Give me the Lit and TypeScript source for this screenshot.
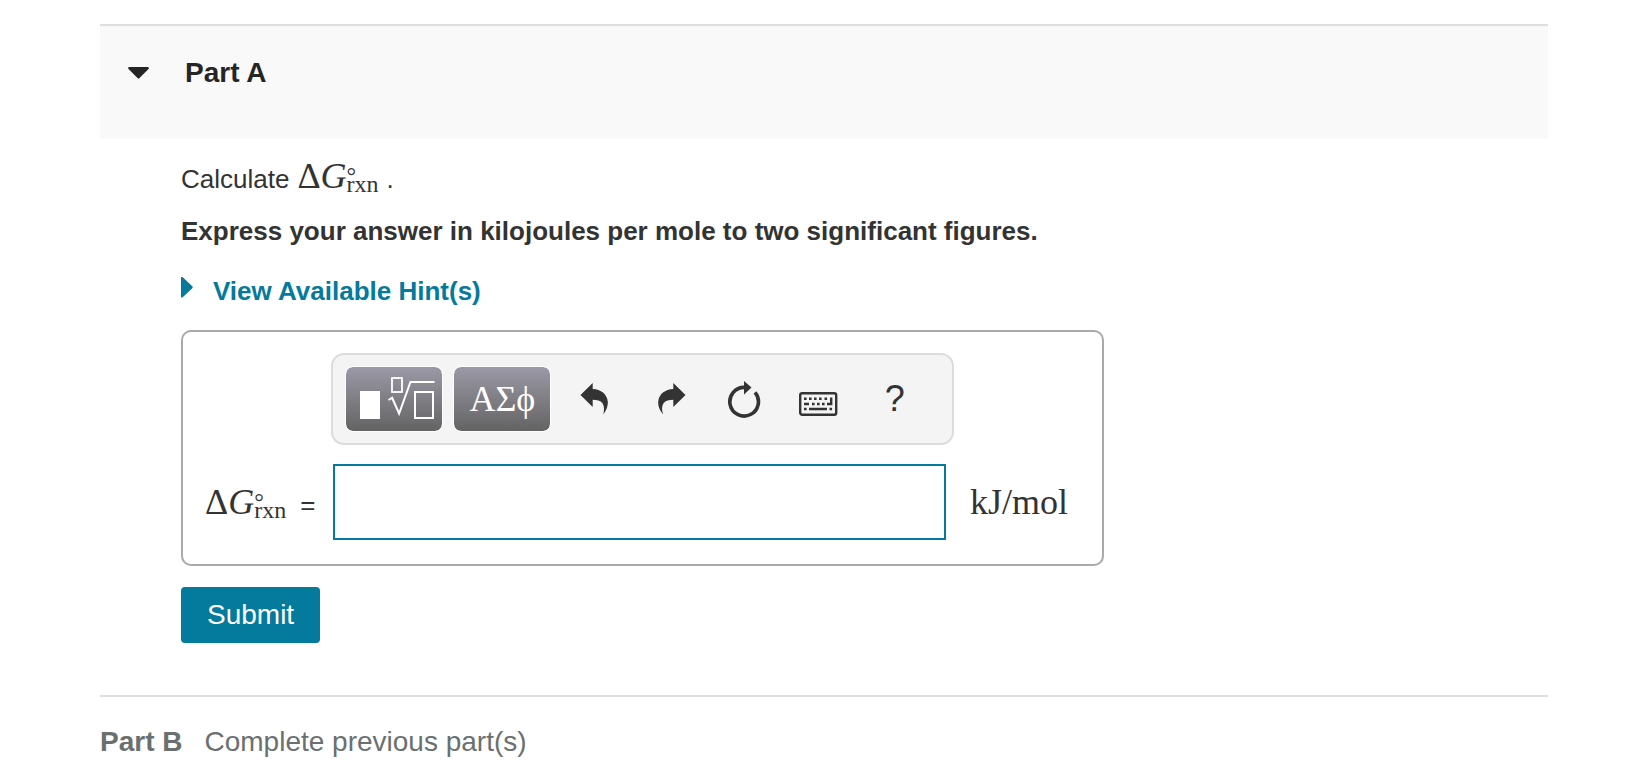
import { LitElement, html, css, svg } from "lit";
import { customElement, state } from "lit/decorators.js";

const templatesIcon = svg`
  <svg width="84" height="44" viewBox="0 0 84 44" fill="none" stroke="#fff" aria-hidden="true">
    <rect x="8" y="14" width="20" height="28" fill="#fff" stroke="none" />
    <rect x="40" y="1" width="10" height="14" stroke-width="1.8" />
    <path d="M36.500 23l3.600-2.200 7 15.700L58.500 5h24" stroke-width="2" />
    <rect x="63" y="15" width="18" height="26" stroke-width="2" />
  </svg>`;

const undoIcon = svg`
  <svg width="41" height="40" viewBox="0 0 41 40" fill="currentColor" aria-hidden="true">
    <path d="M6.500 16L18.700 4v6C27 10.400 33 15 33.800 22.500c.3 4.800-1.800 9.500-4.500 12.800 1-4 1.200-8-.8-11-2-2.800-5.500-3.600-9.800-3.600V28z" />
  </svg>`;

const redoIcon = svg`
  <svg width="41" height="40" viewBox="0 0 41 40" fill="currentColor" aria-hidden="true">
    <path d="M36.500 16L24.300 4v6C16 10.400 10 15 9.200 22.500c-.3 4.800 1.800 9.500 5 12.800-1.500-4-1.700-8 .3-11 2-2.800 5.500-3.600 9.800-3.600V28z" />
  </svg>`;

const resetIcon = svg`
  <svg width="41" height="40" viewBox="0 0 41 40" fill="none" aria-hidden="true">
    <path d="M31 13.400A14.300 14.300 0 1 1 20.500 8.400" stroke="currentColor" stroke-width="3.600" />
    <path d="M20 2l7.500 6.500L20 15.500z" fill="currentColor" />
  </svg>`;

const keyboardIcon = svg`
  <svg width="41" height="40" viewBox="0 0 41 40" fill="none" stroke="currentColor" aria-hidden="true">
    <rect x="1.200" y="14.200" width="36" height="21.600" rx="2" stroke-width="2.400" />
    <g stroke-width="2.400">
      <path d="M5 19.700h2.600M10 19.700h2.600M15 19.700h2.600M20 19.700h2.600M25.500 19.700h2.600" />
      <path d="M5 25h5M13 25h2.600M18 25h2.600M23 25h2.600M28 25h4.200v-6.500" />
      <path d="M5 30h2.600M10 30h18M30.500 30h2.600" />
    </g>
  </svg>`;

@customElement("gibbs-symbol")
class GibbsSymbol extends LitElement {
  static styles = css`
    :host {
      display: inline-flex;
      align-items: flex-start;
      font-family: "Liberation Serif", serif;
      font-size: 36px;
      line-height: 40px;
    }
    .scripts {
      display: flex;
      flex-direction: column;
      padding-top: 16px;
    }
    sup,
    sub {
      font-size: 24px;
      line-height: 8px;
    }
  `;

  render() {
    return html`<span>Δ</span><i>G</i><span class="scripts"><sup>°</sup><sub>rxn</sub></span>`;
  }
}

@customElement("app-root")
class AppRoot extends LitElement {
  @state() private open = true;

  static styles = css`
    :host {
      display: block;
      box-sizing: border-box;
      padding: 24px 92px 24px 100px;
      background: #fff;
      color: #333;
      font-family: "Liberation Sans", Arial, sans-serif;
      font-size: 26px;
    }
    h2,
    p {
      margin: 0;
      font-size: inherit;
    }
    button {
      border: 0;
      margin: 0;
      padding: 0;
      background: none;
      color: inherit;
      font: inherit;
      cursor: pointer;
    }
    .part-head {
      border-top: 2px solid #dedede;
      background: #f9f9f9;
      padding: 31px 28px 50px;
    }
    .toggle {
      display: flex;
      align-items: center;
      gap: 36px;
      font-size: 28px;
      font-weight: bold;
      line-height: 32px;
      color: #252525;
    }
    .body {
      padding: 17px 0 52px 81px;
    }
    .question {
      display: flex;
      align-items: baseline;
      gap: 8px;
      line-height: 40px;
    }
    .instruction {
      margin-top: 12px;
      font-weight: bold;
      line-height: 40px;
    }
    .hints {
      display: flex;
      width: fit-content;
      gap: 20px;
      margin-top: 24px;
      font-weight: bold;
      line-height: 32px;
      color: #047a9c;
      text-decoration: none;
    }
    .answer {
      box-sizing: border-box;
      display: grid;
      grid-template-columns: auto minmax(0, 1fr) auto;
      align-items: center;
      row-gap: 19px;
      max-width: 923px;
      margin-top: 23px;
      padding: 21px 34px 24px 22px;
      border: 2px solid #a9a9a9;
      border-radius: 10px;
    }
    .toolbar {
      grid-column: 2;
      display: flex;
      align-items: center;
      gap: 10px;
      margin: 0 -8px 0 -2px;
      padding: 11px 12px;
      border: 2px solid #dcdcdc;
      border-radius: 13px;
      background: #f4f4f4;
    }
    .palette {
      box-sizing: border-box;
      display: flex;
      flex: none;
      align-items: center;
      justify-content: center;
      width: 98px;
      height: 66px;
      border: 1px solid #fff;
      border-radius: 8px;
      background: linear-gradient(#9b99a6, #646363) padding-box;
      color: #fff;
      font-family: "Liberation Serif", serif;
      font-size: 36px;
      line-height: 40px;
    }
    .palette svg {
      flex: none;
    }
    .tools {
      display: flex;
      margin-left: -4px;
    }
    .tool {
      display: flex;
      align-items: center;
      justify-content: center;
      width: 75px;
      height: 66px;
      font-size: 36px;
    }
    .label {
      grid-column: 1;
      display: flex;
      align-items: baseline;
      gap: 14px;
      padding-right: 18px;
    }
    .value {
      box-sizing: border-box;
      width: 100%;
      height: 76px;
      padding: 0 12px;
      border: 2px solid #047a9c;
      border-radius: 0;
      outline: none;
      background: #fff;
      color: inherit;
      font: inherit;
    }
    .unit {
      padding-left: 24px;
      font-family: "Liberation Serif", serif;
      font-size: 36px;
      line-height: 40px;
    }
    .submit {
      display: block;
      margin-top: 21px;
      padding: 0 26px;
      border-radius: 4px;
      background: #047a9c;
      color: #fff;
      font-size: 28px;
      line-height: 56px;
    }
    .next {
      display: flex;
      gap: 22px;
      border-top: 2px solid #dedede;
      padding-top: 29px;
      color: #6a7070;
      font-size: 28px;
      line-height: 32px;
    }
  `;

  render() {
    return html`
      <section>
        <h2 class="part-head">
          <button class="toggle" aria-expanded=${this.open} @click=${() => (this.open = !this.open)}>
            <svg width="21" height="12" viewBox="0 0 21 12" aria-hidden="true">
              <path d="M1 0h19q1.500.8.500 2L11.500 11q-1 1-2 0L.5 2Q-.5.8 1 0z" fill="currentColor" />
            </svg>
            Part A
          </button>
        </h2>
        ${this.open ? this.renderBody() : ""}
      </section>
      <section class="next"><strong>Part B</strong><span>Complete previous part(s)</span></section>
    `;
  }

  private renderBody() {
    return html`
      <div class="body">
        <p class="question">
          <span>Calculate</span><gibbs-symbol></gibbs-symbol><span>.</span>
        </p>
        <p class="instruction">
          Express your answer in kilojoules per mole to two significant figures.
        </p>
        <a class="hints" href="#hints">
          <svg width="12" height="24" viewBox="1 -1 12 24" aria-hidden="true">
            <path d="M0 1h2.500L12 10q1.500 1.200 0 2.400L3.500 20.500Q2 22 0 21z" fill="currentColor" />
          </svg>
          View Available Hint(s)
        </a>
        <div class="answer">
          <div class="toolbar" role="toolbar" aria-label="Equation editor">
            <button class="palette" aria-label="Templates">${templatesIcon}</button>
            <button class="palette" aria-label="Symbols">ΑΣϕ</button>
            <div class="tools">
              <button class="tool" aria-label="Undo">${undoIcon}</button>
              <button class="tool" aria-label="Redo">${redoIcon}</button>
              <button class="tool" aria-label="Reset">${resetIcon}</button>
              <button class="tool" aria-label="Keyboard shortcuts">${keyboardIcon}</button>
              <button class="tool" aria-label="Help">?</button>
            </div>
          </div>
          <label class="label" for="value"><gibbs-symbol></gibbs-symbol><span>=</span></label>
          <input class="value" id="value" type="text" autocomplete="off" />
          <span class="unit">kJ/mol</span>
        </div>
        <button class="submit">Submit</button>
      </div>
    `;
  }
}
